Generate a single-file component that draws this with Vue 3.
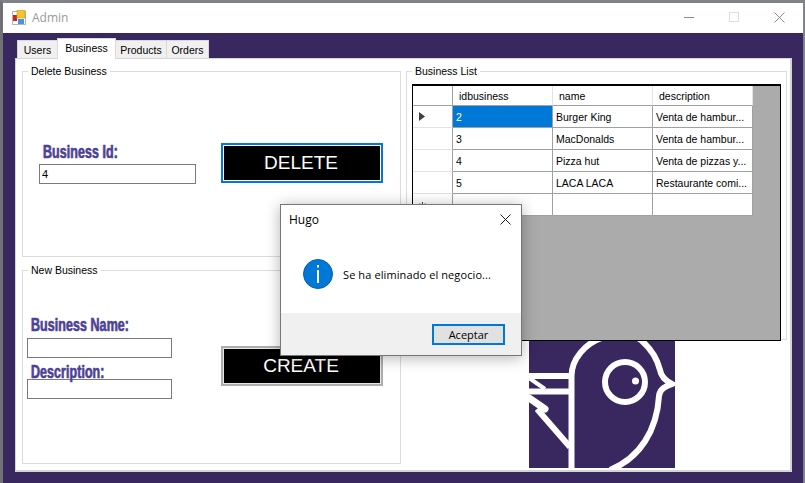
<script setup>
const tabs = ['Users', 'Business', 'Products', 'Orders']
const columns = ['idbusiness', 'name', 'description']
const rows = [
  { id: '2', name: 'Burger King', description: 'Venta de hambur...' },
  { id: '3', name: 'MacDonalds', description: 'Venta de hambur...' },
  { id: '4', name: 'Pizza hut', description: 'Venta de pizzas y...' },
  { id: '5', name: 'LACA LACA', description: 'Restaurante comi...' }
]
</script>

<template>
  <div class="window">
    <header class="titlebar">
      <svg class="app-icon" width="14" height="15" viewBox="0 0 14 15">
        <rect x="0.5" y="1.5" width="13" height="13" fill="#fff" stroke="#b5b5b5" />
        <rect x="1" y="5" width="4" height="6" fill="#c8281e" />
        <rect x="5" y="0" width="8" height="8" fill="#f5c531" stroke="#c49a20" stroke-width="0.6" />
        <rect x="6" y="9" width="6" height="5" fill="#4f8fdc" />
      </svg>
      <span class="title">Admin</span>
      <div class="controls">
        <svg width="10" height="10" viewBox="0 0 10 10"><path d="M0 5.5H10" stroke="#8a8a8a" /></svg>
        <svg width="10" height="10" viewBox="0 0 10 10"><rect x="0.5" y="0.5" width="9" height="9" fill="none" stroke="#dedede" /></svg>
        <svg width="11" height="11" viewBox="0 0 11 11"><path d="M0.5 0.5L10.5 10.5M10.5 0.5L0.5 10.5" stroke="#8a8a8a" /></svg>
      </div>
    </header>

    <div class="content">
      <div class="tabstrip">
        <div v-for="tab in tabs" :key="tab" class="tab" :class="[tab.toLowerCase(), { active: tab === 'Business' }]">{{ tab }}</div>
      </div>

      <div class="tabpage">
        <div class="column">
          <fieldset class="group delete-group">
            <legend>Delete Business</legend>
            <div class="group-body">
              <div class="fields">
                <label class="field-label">Business Id:</label>
                <input class="textbox" type="text" value="4" readonly />
              </div>
              <button class="action focused">DELETE</button>
            </div>
          </fieldset>

          <fieldset class="group new-group">
            <legend>New Business</legend>
            <div class="group-body">
              <div class="fields">
                <label class="field-label">Business Name:</label>
                <input class="textbox" type="text" readonly />
                <label class="field-label second">Description:</label>
                <input class="textbox" type="text" readonly />
              </div>
              <button class="action">CREATE</button>
            </div>
          </fieldset>
        </div>

        <div class="column">
          <fieldset class="group list-group">
            <legend>Business List</legend>
            <div class="datagrid">
              <div class="table">
                <div class="row-head top"></div>
                <div v-for="col in columns" :key="col" class="col-head">{{ col }}</div>

                <template v-for="(row, i) in rows" :key="row.id">
                  <div class="row-head">
                    <svg v-if="i === 0" width="6" height="9" viewBox="0 0 6 9"><path d="M0 0L6 4.5L0 9Z" fill="#404040" /></svg>
                  </div>
                  <div class="cell" :class="{ selected: i === 0 }">{{ row.id }}</div>
                  <div class="cell">{{ row.name }}</div>
                  <div class="cell">{{ row.description }}</div>
                </template>

                <div class="row-head new-row">
                  <svg width="7" height="7" viewBox="0 0 7 7"><path d="M3.5 0V7M0.5 1.7L6.5 5.3M6.5 1.7L0.5 5.3" stroke="#404040" /></svg>
                </div>
                <div class="cell"></div>
                <div class="cell"></div>
                <div class="cell"></div>
              </div>
            </div>
          </fieldset>

          <svg class="bird" width="146" height="127" viewBox="529 341 146 127">
            <rect x="529" y="341" width="146" height="127" fill="#39275f" />
            <g fill="none" stroke="#fff" stroke-width="6">
              <path d="M571.5 470V376C571.5 360 585 342 605 337C620 333 636 335 642 341C650 348 657 358 660 370C661 376 666 381 672 384C667 386 660 388 659 396C657 430 640 458 610 470" />
              <path d="M529 376H571M529 391.5H571" />
              <path d="M529 378L545 389" stroke-width="4" />
              <path d="M529 398L545 409" stroke-width="7" stroke-linecap="round" />
              <path d="M537 409L570 447" />
              <circle cx="625" cy="382" r="20" />
            </g>
            <circle cx="635.5" cy="381" r="3.5" fill="#fff" />
          </svg>
        </div>
      </div>
    </div>

    <div class="dialog">
      <div class="dialog-title">
        <span>Hugo</span>
        <svg width="11" height="11" viewBox="0 0 11 11"><path d="M0.5 0.5L10.5 10.5M10.5 0.5L0.5 10.5" stroke="#1a1a1a" /></svg>
      </div>
      <div class="dialog-body">
        <svg width="30" height="30" viewBox="0 0 30 30">
          <circle cx="15" cy="15" r="14.5" fill="#0078d7" stroke="#0a5ea8" />
          <rect x="14" y="6" width="2" height="2.5" fill="#fff" />
          <rect x="14" y="11" width="2" height="13" fill="#fff" />
        </svg>
        <span>Se ha eliminado el negocio...</span>
      </div>
      <div class="dialog-footer">
        <button class="ok">Aceptar</button>
      </div>
    </div>
  </div>
</template>

<style>
html, body {
  margin: 0;
  background: #fff;
  overflow: hidden;
}
</style>

<style scoped>
.window {
  position: relative;
  box-sizing: border-box;
  width: 805px;
  height: 483px;
  background: #39275f;
  border-top: 3px solid #7f8287;
  border-left: 3px solid #6f7176;
  border-right: 2px solid #7f8590;
  font-family: "Liberation Sans", Arial, sans-serif;
  font-size: 10.5px;
  color: #000;
}

.titlebar {
  display: flex;
  align-items: center;
  box-sizing: border-box;
  height: 30px;
  background: #fff;
  padding: 0 0 2px 9px;
}
.app-icon {
  margin-right: 6px;
}
.title {
  font-family: "Open Sans", sans-serif;
  font-size: 12px;
  color: #9a9a9a;
}
.controls {
  margin-left: auto;
  display: flex;
  align-items: center;
  gap: 35px;
  padding-right: 18px;
}

.content {
  padding: 5px 11px 0 12px;
}

.tabstrip {
  display: flex;
  align-items: flex-end;
  height: 20px;
  padding-left: 2px;
}
.tab {
  box-sizing: border-box;
  height: 18px;
  line-height: 18px;
  text-align: center;
  background: #f0f0f0;
  border: 1px solid #d9d9d9;
  border-bottom: 0;
  margin-right: -1px;
}
.tab.users { width: 41px; }
.tab.business { width: 59px; }
.tab.products { width: 52px; }
.tab.orders { width: 43px; }
.tab.active {
  position: relative;
  height: 21px;
  margin-bottom: -1px;
  line-height: 18px;
  background: #fff;
  z-index: 1;
}

.tabpage {
  box-sizing: border-box;
  display: flex;
  gap: 5px;
  height: 414px;
  padding: 6px 0 0 6px;
  background: #fff;
  border: 1px solid #d4d4d4;
  border-width: 1px 2px 2px 1px;
}

.column {
  display: flex;
  flex-direction: column;
}

.group {
  box-sizing: border-box;
  margin: 0;
  padding: 0;
  border: 1px solid #dcdcdc;
  min-width: 0;
}
.group legend {
  margin-left: 5px;
  padding: 0 3px;
  font-size: 10.5px;
  line-height: 13px;
}
.group-body {
  display: flex;
  align-items: flex-start;
}

.delete-group {
  width: 379px;
  height: 192px;
}
.delete-group .group-body {
  padding: 65px 0 0 16px;
  gap: 25px;
}
.delete-group .fields {
  width: 157px;
}
.delete-group .field-label {
  line-height: 18px;
}
.new-group {
  width: 379px;
  height: 200px;
  margin-top: 7px;
}
.new-group .group-body {
  padding: 40px 0 0 4px;
  gap: 49px;
}
.new-group .fields {
  width: 145px;
}
.new-group .action {
  margin-top: 29px;
}

.field-label {
  display: block;
  height: 21px;
  padding-left: 4px;
  font-family: "Liberation Sans", sans-serif;
  font-size: 18px;
  font-weight: 700;
  line-height: 16px;
  color: #4a4198;
  -webkit-text-stroke: 0.5px #4a4198;
  text-shadow: -1px 0 0 rgba(170, 90, 130, 0.35);
  white-space: nowrap;
  transform: scaleX(0.7);
  transform-origin: 4px 0;
}
.field-label.second {
  line-height: 28px;
}

.textbox {
  display: block;
  box-sizing: border-box;
  width: 100%;
  height: 20px;
  margin: 0;
  padding: 0 2px;
  border: 1px solid #7a7a7a;
  border-radius: 0;
  outline: none;
  background: #fff;
  font-family: "Liberation Sans", sans-serif;
  font-size: 11px;
  color: #000;
}

.action {
  box-sizing: border-box;
  width: 162px;
  height: 40px;
  margin: 0;
  padding: 0 2px 0 0;
  background: #000;
  border: 2px solid #adadad;
  box-shadow: inset 0 0 0 1px #e6e6e6;
  color: #fff;
  font-family: "Liberation Sans", sans-serif;
  font-size: 19px;
}
.action.focused {
  border-color: #0078d7;
  box-shadow: inset 0 0 0 1px #fff;
}

.list-group {
  width: 381px;
  height: 275px;
}

.datagrid {
  box-sizing: border-box;
  width: 369px;
  height: 257px;
  margin: 6px 0 0 5px;
  background: #ababab;
  border: 1px solid #000;
  border-top-width: 2px;
}
.table {
  display: grid;
  grid-template-columns: 40px 100px 100px 100px;
  grid-template-rows: 20px repeat(5, 22px);
  width: 340px;
}
.row-head {
  box-sizing: border-box;
  display: flex;
  align-items: center;
  padding-left: 6px;
  background: #fff;
  border-right: 1px solid #a0a0a0;
  border-bottom: 1px solid #e3e3e3;
}
.row-head.top {
  border-bottom-color: #a0a0a0;
}
.row-head.new-row {
  border-bottom: 0;
}
.col-head {
  box-sizing: border-box;
  padding-left: 6px;
  line-height: 20px;
  background: #fff;
  border-right: 1px solid #e3e3e3;
  border-bottom: 1px solid #a0a0a0;
}
.cell {
  box-sizing: border-box;
  padding: 1px 0 0 3px;
  line-height: 21px;
  background: #fff;
  border-right: 1px solid #a0a0a0;
  border-bottom: 1px solid #a0a0a0;
  white-space: nowrap;
  overflow: hidden;
}
.cell.selected {
  background: #0078d7;
  color: #fff;
}

.bird {
  display: block;
  margin: 1px 0 0 123px;
}

.dialog {
  position: absolute;
  left: 277px;
  top: 201px;
  box-sizing: border-box;
  display: flex;
  flex-direction: column;
  width: 242px;
  height: 152px;
  background: #fff;
  border: 1px solid #767676;
  box-shadow: 0 2px 14px rgba(0, 0, 0, 0.3);
  font-family: "Open Sans", sans-serif;
  font-size: 12px;
  color: #000;
}
.dialog-title {
  display: flex;
  align-items: center;
  justify-content: space-between;
  height: 29px;
  padding: 0 10px 0 8px;
}
.dialog-body {
  flex: 1;
  display: flex;
  align-items: center;
  gap: 10px;
  padding: 1px 0 0 22px;
  font-size: 11px;
  letter-spacing: 0.1px;
}
.dialog-footer {
  display: flex;
  justify-content: flex-end;
  align-items: flex-start;
  box-sizing: border-box;
  height: 42px;
  padding: 11px 16px 0 0;
  background: #f0f0f0;
}
.ok {
  box-sizing: border-box;
  width: 73px;
  height: 21px;
  margin: 0;
  padding: 0;
  background: #e1e1e1;
  border: 2px solid #0078d7;
  font-family: "Open Sans", sans-serif;
  font-size: 11px;
  line-height: 15px;
  color: #000;
}
</style>
